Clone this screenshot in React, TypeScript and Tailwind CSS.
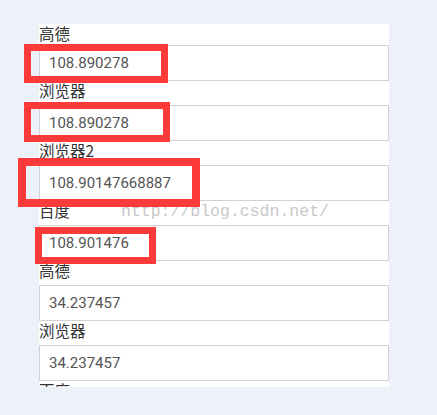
import React from "react";

const rows: { label: string; value: string }[] = [
  { label: "高德", value: "108.890278" },
  { label: "浏览器", value: "108.890278" },
  { label: "浏览器2", value: "108.90147668887" },
  { label: "百度", value: "108.901476" },
  { label: "高德", value: "34.237457" },
  { label: "浏览器", value: "34.237457" },
];

const cjk = { fontFamily: '"Noto Sans CJK SC", "Noto Sans", sans-serif' };
const roboto = { fontFamily: 'Roboto, "Noto Sans", sans-serif' };

export default function App() {
  return (
    <div className="relative w-[437px] h-[415px] overflow-hidden bg-[#edf1f9] pl-[39px] pt-[24px]">
      <div className="w-[350px] h-[363px] bg-white overflow-hidden flex flex-col">
        {rows.map((r, i) => (
          <div key={i} className="flex flex-col shrink-0">
            <div
              className={
                i === 0
                  ? "h-[21px] flex items-start pt-[1px] text-[15.5px] leading-[17px] text-[#333]"
                  : "h-[24px] flex items-start pt-[1px] text-[15.5px] leading-[17px] text-[#333]"
              }
              style={cjk}
            >
              {r.label}
            </div>
            <div
              className="h-[36px] border border-[#d2d2d2] flex items-center pl-[9px] text-[15px] text-[#555]"
              style={roboto}
            >
              {r.value}
            </div>
          </div>
        ))}
        <div
          className="h-[24px] shrink-0 flex items-start pt-[1px] text-[15.5px] leading-[17px] text-[#333]"
          style={cjk}
        >
          百度
        </div>
      </div>

      {/* watermark */}
      <div
        className="absolute left-[121px] top-[204px] text-[16.5px] leading-none text-[#c8c8c8] pointer-events-none"
        style={{ fontFamily: '"Liberation Mono", monospace' }}
      >
        http://blog.csdn.net/
      </div>

      {/* red annotation boxes */}
      <div className="absolute left-[24px] top-[44px] w-[144px] h-[39px] border-[7px] border-[#fc3a3a]" />
      <div className="absolute left-[24px] top-[102px] w-[146px] h-[40px] border-[7px] border-[#fc3a3a]" />
      <div className="absolute left-[18px] top-[158px] w-[182px] h-[49px] border-[8px] border-[#fc3a3a]" />
      <div className="absolute left-[35px] top-[227px] w-[121px] h-[37px] border-[7px] border-[#fc3a3a]" />
    </div>
  );
}
